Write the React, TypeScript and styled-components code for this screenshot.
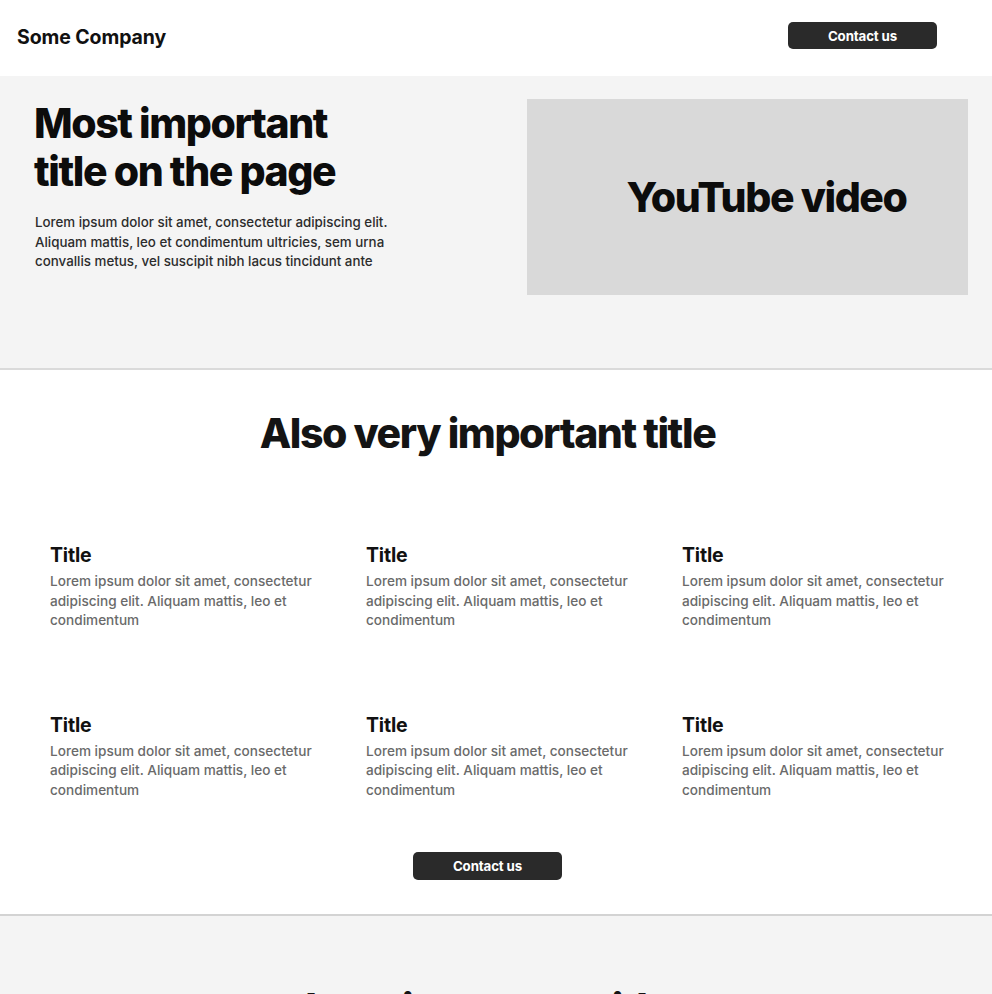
import React from "react";
import styled, { createGlobalStyle } from "styled-components";

const Global = createGlobalStyle`
  html, body { margin: 0; padding: 0; background: #ffffff; }
  body { font-family: Inter, "Noto Sans", "Liberation Sans", sans-serif; color: #111; }
  * { box-sizing: border-box; }
`;

const Page = styled.div`
  width: 992px;
  overflow: hidden;
`;

const Header = styled.header`
  height: 76px;
  display: flex;
  align-items: center;
  justify-content: space-between;
  padding: 0 55px 0 17px;
  background: #fff;
`;

const Brand = styled.div`
  font-size: 19.5px;
  font-weight: 650;
  letter-spacing: -0.005em;
  color: #111;
  margin-top: -2px;
`;

const Button = styled.button`
  width: 149px;
  height: 27px;
  border: none;
  border-radius: 5px;
  background: #2a2a2a;
  color: #fff;
  font-family: Inter, "Noto Sans", sans-serif;
  font-size: 13.3px;
  font-weight: 700;
  letter-spacing: -0.01em;
  display: flex;
  align-items: center;
  justify-content: center;
  margin-top: -5px;
`;

const Hero = styled.section`
  background: #f4f4f4;
  border-bottom: 2px solid #dadada;
  height: 294px;
  display: flex;
  justify-content: space-between;
  padding: 23px 24px 0 34px;
`;

const HeroText = styled.div`
  width: 400px;
  display: flex;
  flex-direction: column;
`;

const BigTitle = styled.h1`
  margin: 0;
  font-size: 41px;
  line-height: 48px;
  font-weight: 800;
  letter-spacing: -0.035em;
  color: #0c0c0c;
`;

const Lead = styled.p`
  margin: 18px 0 0 1px;
  font-size: 13.35px;
  line-height: 19.5px;
  color: #2c2c2c;
  font-weight: 500;
  letter-spacing: 0;
`;

const Video = styled.div`
  width: 441px;
  height: 196px;
  background: #d9d9d9;
  display: flex;
  align-items: center;
  justify-content: center;
  padding-left: 38px;
  font-size: 41px;
  font-weight: 800;
  letter-spacing: -0.035em;
  color: #0c0c0c;
`;

const Features = styled.section`
  background: #fff;
  border-bottom: 2px solid #d3d3d3;
  width: 992px;
  padding: 39px 17px 34px 0;
  display: flex;
  flex-direction: column;
  align-items: center;
`;

const SectionTitle = styled.h2`
  margin: 0;
  font-size: 41px;
  line-height: 48px;
  font-weight: 800;
  letter-spacing: -0.035em;
  color: #141414;
`;

const Grid = styled.div`
  align-self: flex-start;
  margin: 86px 0 0 50px;
  display: grid;
  grid-template-columns: repeat(3, 316px);
  row-gap: 82px;
`;

const Card = styled.div`
  width: 280px;
`;

const CardTitle = styled.h3`
  margin: 0;
  font-size: 19.5px;
  line-height: 24px;
  font-weight: 700;
  letter-spacing: -0.01em;
  color: #111;
`;

const CardText = styled.p`
  margin: 5px 0 0;
  font-size: 13.6px;
  line-height: 19.5px;
  color: #6a6a6a;
  font-weight: 500;
  letter-spacing: 0;
`;

const CenterButton = styled(Button)`
  margin-top: 52px;
  height: 28px;
`;

const Lower = styled.section`
  background: #f4f4f4;
  height: 200px;
  padding: 68px 17px 0 0;
  display: flex;
  justify-content: center;
`;

const cards = Array.from({ length: 6 }, (_, i) => i);

export default function App() {
  return (
    <Page>
      <Global />
      <Header>
        <Brand>Some Company</Brand>
        <Button>Contact us</Button>
      </Header>
      <Hero>
        <HeroText>
          <BigTitle>
            Most important
            <br />
            title on the page
          </BigTitle>
          <Lead>
            Lorem ipsum dolor sit amet, consectetur adipiscing elit. Aliquam mattis, leo et
            condimentum ultricies, sem urna convallis metus, vel suscipit nibh lacus tincidunt ante
          </Lead>
        </HeroText>
        <Video>YouTube video</Video>
      </Hero>
      <Features>
        <SectionTitle>Also very important title</SectionTitle>
        <Grid>
          {cards.map((i) => (
            <Card key={i}>
              <CardTitle>Title</CardTitle>
              <CardText>
                Lorem ipsum dolor sit amet, consectetur adipiscing elit. Aliquam mattis, leo et
                condimentum
              </CardText>
            </Card>
          ))}
        </Grid>
        <CenterButton>Contact us</CenterButton>
      </Features>
      <Lower>
        <SectionTitle>Less important title</SectionTitle>
      </Lower>
    </Page>
  );
}
